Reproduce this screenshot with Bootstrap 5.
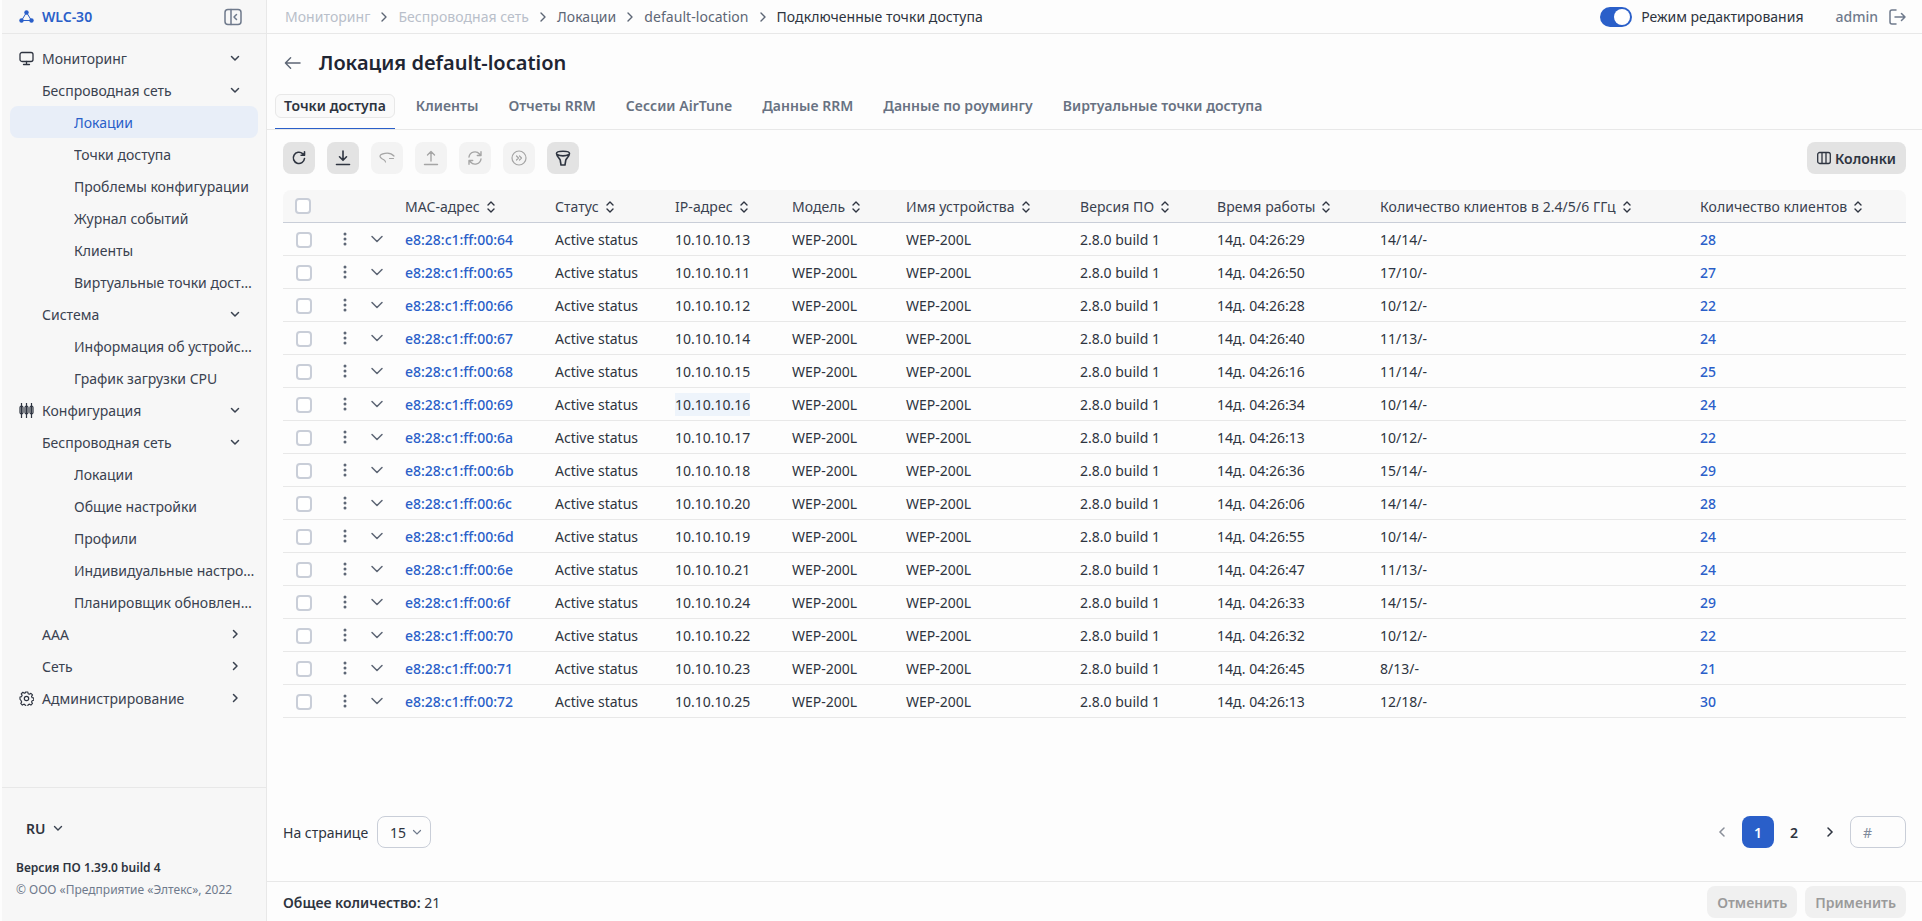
<!DOCTYPE html>
<html lang="ru">
<head>
  <meta charset="UTF-8" />
  <meta name="viewport" content="width=device-width, initial-scale=1.0"/>
  <title>WLC-30</title>
  <link href="https://cdn.jsdelivr.net/npm/bootstrap@5.3.3/dist/css/bootstrap.min.css" rel="stylesheet"/>
  <style>
    html, body { height: 100%; }
    body { background: #fdfdfd; font-family: "Noto Sans", sans-serif; font-size: 14px; color: #2e3440; overflow: hidden; }
    svg { display: block; flex: none; }
    .app-shell { height: 921px; }
    .main-col { min-width: 0; }

    /* sidebar */
    .side-panel { width: 265px; flex: none; margin-left: 2px; background: #f7f7f7; border-right: 1px solid #e8e8e8; }
    .side-head { height: 34px; padding: 0 24px 0 17px; border-bottom: 1px solid #e8e8e8; color: #2a5fc9; font-weight: 600; }
    .side-menu { padding-top: 8px; }
    .side-item { height: 32px; color: #3a4250; white-space: nowrap; padding-right: 25px; }
    .side-l1 { padding-left: 17px; }
    .side-l2 { padding-left: 40px; }
    .side-l3 { padding-left: 64px; padding-right: 3px; margin: 0 8px; border-radius: 8px; }
    .side-l3 span { overflow: hidden; text-overflow: ellipsis; }
    .side-l3.is-active { background: #e8eef8; color: #2a5fc9; }
    .side-ico { width: 15px; margin-right: 8px; }
    .side-foot { border-top: 1px solid #e8e8e8; height: 134px; padding: 28px 14px 0; }
    .lang-pick { padding-left: 10px; font-weight: 600; height: 24px; }
    .ver-line { font-size: 12px; font-weight: 600; margin-top: 19px; }
    .copy-line { font-size: 12px; color: #6f7a8c; margin-top: 4px; }

    /* top bar */
    .top-bar { height: 34px; border-bottom: 1px solid #e8e8e8; padding: 0 16px 0 18px; flex: none; }
    .crumb-list { letter-spacing: .05px; }
    .crumb-muted { color: #b9bfca; }
    .crumb-mid { color: #5d6675; }
    .crumb-sep { margin: 0 9px; }
    .mode-switch { width: 32px; height: 20px; border-radius: 10px; background: #2a5fc9; position: relative; }
    .mode-switch::after { content: ""; position: absolute; right: 2px; top: 2px; width: 16px; height: 16px; background: #fff; border-radius: 50%; }
    .mode-label { margin-left: 9px; }
    .user-name { color: #6f7a8c; font-weight: 500; margin-left: 32px; }
    .user-out { margin-left: 10px; }

    /* title and tabs */
    .page-title { height: 58px; padding-left: 17px; flex: none; }
    .page-title h1 { font-size: 20px; font-weight: 600; margin: 0 0 0 18px; color: #1f2533; }
    .tab-row { height: 38px; border-bottom: 1px solid #e8e8e8; padding: 2px 0 0 8px; flex: none; }
    .tab-link { padding: 0 8px; height: 24px; line-height: 22px; margin-right: 12px; color: #687282; font-weight: 600; letter-spacing: .03px; white-space: nowrap; border: 1px solid transparent; border-radius: 6px; }
    .tab-first { position: relative; color: #2e3440; background: #fafafa; border-color: #e8e8e8; }
    .tab-first::after { content: ""; position: absolute; left: -1px; right: -1px; bottom: -12px; height: 1px; background: #2a5fc9; }

    /* tools */
    .tool-row { padding: 12px 16px 0; height: 60px; flex: none; }
    .tool-group { gap: 12px; }
    .tool-btn { width: 32px; height: 32px; border-radius: 8px; background: #e3e3e3; color: #2e3440; }
    .tool-btn.is-off { background: #f3f3f3; color: #a5a5a5; }
    .cols-btn { height: 32px; padding: 0 10px; border-radius: 8px; background: #e3e3e3; font-weight: 600; color: #2e3440; }

    /* table */
    .grid-wrap { padding: 0 16px; }
    .ap-table { width: 1623px; table-layout: fixed; border-collapse: separate; border-spacing: 0; margin: 0; }
    .ap-table th, .ap-table td { padding: 0; white-space: nowrap; vertical-align: middle; background: transparent; }
    .ap-table th { height: 33px; background: #f7f7f7; font-weight: 400; color: #3a4250; letter-spacing: .06px; border-bottom: 1px solid #c9ced8; }
    .ap-table th:first-child { border-top-left-radius: 8px; }
    .ap-table th:last-child { border-top-right-radius: 8px; }
    .ap-table td { height: 33px; border-bottom: 1px solid #e8e8e8; color: #2e3440; }
    .ap-table a { color: #2a5fc9; font-weight: 500; text-decoration: none; }
    .sort-ico { display: inline-block; vertical-align: -2px; margin-left: 6px; }
    .tick-box { width: 16px; height: 16px; border: 2px solid #c9ced8; border-radius: 4px; background: #fff; margin-left: 12px; }
    td .tick-box { margin: 2px 0 0 13px; }
    .row-dots { margin-left: 20px; }
    .row-chev { margin-left: 4px; }
    .ip-mark { background: #eef4fb; padding: 2px 0; }

    /* bottom */
    .pager-row { padding: 0 16px; height: 98px; flex: none; }
    .page-pick { height: 32px; width: 54px; margin-left: 9px; border: 1px solid #c9ced8; border-radius: 8px; padding: 0 8px 0 12px; }
    .page-num { width: 32px; height: 32px; border-radius: 8px; font-weight: 600; color: #2e3440; }
    .page-num.is-on { background: #2a5fc9; color: #fff; }
    .page-jump { width: 56px; height: 32px; border: 1px solid #c9ced8; border-radius: 8px; padding-left: 12px; color: #7f8a9c; }
    .foot-bar { height: 40px; border-top: 1px solid #e8e8e8; padding: 4px 16px 0; flex: none; }
    .foot-total { padding-top: 6px; }
    .foot-btn { height: 32px; padding: 0 10px; border-radius: 8px; background: #f0f0f0; color: #9a9a9a; font-weight: 600; }
  </style>
</head>
<body>

<div class="app-shell d-flex">
  <!-- Sidebar -->
  <aside class="side-panel d-flex flex-column">
    <div class="side-head d-flex align-items-center justify-content-between">
      <div class="d-flex align-items-center gap-2">
        <svg width="15" height="15" viewBox="0 0 15 15" fill="#2a5fc9"><circle cx="7.5" cy="3.5" r="2.2"/><circle cx="2.5" cy="11.5" r="2.2"/><circle cx="12.5" cy="11.5" r="2.2"/><path d="M7.5 3.5 2.5 11.5h10z" fill="none" stroke="#2a5fc9"/></svg>
        <span>WLC-30</span>
      </div>
      <svg width="18" height="18" viewBox="0 0 18 18" fill="none" stroke="#6f7a8c" stroke-width="1.5"><rect x="1" y="1.5" width="16" height="15" rx="3"/><path d="M7 1.5v15M12.5 6.5 10 9l2.5 2.5" stroke-linecap="round" stroke-linejoin="round"/></svg>
    </div>
    <nav class="side-menu flex-grow-1" id="sideMenu"></nav>
    <div class="side-foot">
      <div class="lang-pick d-flex align-items-center gap-2">RU
        <svg width="10" height="10" viewBox="0 0 10 10" fill="none" stroke="#3a4250" stroke-width="1.4"><path d="M1.5 3.5 5 7l3.5-3.5" stroke-linecap="round"/></svg>
      </div>
      <div class="ver-line">Версия ПО 1.39.0 build 4</div>
      <div class="copy-line">© ООО «Предприятие «Элтекс», 2022</div>
    </div>
  </aside>

  <!-- Main -->
  <main class="main-col flex-grow-1 d-flex flex-column">
    <div class="top-bar d-flex align-items-center justify-content-between">
      <div class="crumb-list d-flex align-items-center" id="crumbs"></div>
      <div class="d-flex align-items-center">
        <span class="mode-switch"></span>
        <span class="mode-label">Режим редактирования</span>
        <span class="user-name">admin</span>
        <svg class="user-out" width="18" height="18" viewBox="0 0 18 18" fill="none" stroke="#6f7a8c" stroke-width="1.5" stroke-linecap="round" stroke-linejoin="round"><path d="M8 2H4a2 2 0 0 0-2 2v10a2 2 0 0 0 2 2h4M7 9h10M13.5 5.5 17 9l-3.5 3.5"/></svg>
      </div>
    </div>

    <div class="page-title d-flex align-items-center">
      <svg width="17" height="14" viewBox="0 0 18 14" fill="none" stroke="#5d6675" stroke-width="1.5" stroke-linecap="round" stroke-linejoin="round"><path d="M17 7H1.5M7 1.5 1.5 7 7 12.5"/></svg>
      <h1>Локация default-location</h1>
    </div>

    <div class="tab-row d-flex align-items-start">
      <span class="tab-link tab-first">Точки доступа</span>
      <span class="tab-link">Клиенты</span>
      <span class="tab-link">Отчеты RRM</span>
      <span class="tab-link">Сессии AirTune</span>
      <span class="tab-link">Данные RRM</span>
      <span class="tab-link">Данные по роумингу</span>
      <span class="tab-link">Виртуальные точки доступа</span>
    </div>

    <div class="tool-row d-flex justify-content-between">
      <div class="d-flex tool-group">
        <span class="tool-btn d-flex align-items-center justify-content-center"><svg width="16" height="16" viewBox="0 0 16 16" fill="none" stroke="currentColor" stroke-width="1.6" stroke-linecap="round" stroke-linejoin="round"><path d="M13.5 8.5A5.6 5.6 0 1 1 11.6 3.6L13.5 5.2M13.5 1.8v3.4h-3.4"/></svg></span>
        <span class="tool-btn d-flex align-items-center justify-content-center"><svg width="16" height="16" viewBox="0 0 16 16" fill="none" stroke="currentColor" stroke-width="1.6" stroke-linecap="round" stroke-linejoin="round"><path d="M8 1v9M4.5 6.8 8 10.3l3.5-3.5M1.5 14.5h13"/></svg></span>
        <span class="tool-btn is-off d-flex align-items-center justify-content-center"><svg width="16" height="16" viewBox="0 0 16 16" fill="none" stroke="currentColor" stroke-width="1.2" stroke-linecap="round" stroke-linejoin="round"><path d="M15 6C13 3.8 9.5 2.7 6 3.3 3 3.8 1 5 1 6.2c0 1.3 2 2.6 3.8 3.6 1 .6 1.5 1 1.7 2.2M10.5 8.5h4"/></svg></span>
        <span class="tool-btn is-off d-flex align-items-center justify-content-center"><svg width="16" height="16" viewBox="0 0 16 16" fill="none" stroke="currentColor" stroke-width="1.4" stroke-linecap="round" stroke-linejoin="round"><path d="M8 11V1.5M4.5 5 8 1.5 11.5 5M1.5 14.5h13"/></svg></span>
        <span class="tool-btn is-off d-flex align-items-center justify-content-center"><svg width="16" height="16" viewBox="0 0 16 16" fill="none" stroke="currentColor" stroke-width="1.4" stroke-linecap="round" stroke-linejoin="round"><path d="M2 7a6 6 0 0 1 10.5-3L14 5.5M14 1.8v3.7h-3.7M14 9a6 6 0 0 1-10.5 3L2 10.5M2 14.2v-3.7h3.7"/></svg></span>
        <span class="tool-btn is-off d-flex align-items-center justify-content-center"><svg width="16" height="16" viewBox="0 0 16 16" fill="none" stroke="currentColor" stroke-width="1.2" stroke-linecap="round" stroke-linejoin="round"><circle cx="8" cy="8" r="7"/><path d="M5.5 6 7.5 8l-2 2M8.5 6l2 2-2 2"/></svg></span>
        <span class="tool-btn d-flex align-items-center justify-content-center"><svg width="16" height="16" viewBox="0 0 16 16" fill="none" stroke="currentColor" stroke-width="1.6" stroke-linecap="round" stroke-linejoin="round"><path d="M1.5 3.5c0-3 13-3 13 0 0 2.5-3.2 5-3.7 6.5L10 15H6l-.8-5C4.7 8.5 1.5 6 1.5 3.5zM2.5 4.8c2.5 1.4 8.5 1.4 11 0"/></svg></span>
      </div>
      <span class="cols-btn d-flex align-items-center gap-1">
        <svg width="14" height="14" viewBox="0 0 14 14" fill="none" stroke="#2e3440" stroke-width="1.3"><rect x=".7" y="1.5" width="12.6" height="11" rx="2"/><path d="M5 1.5v11M9 1.5v11"/></svg>
        Колонки
      </span>
    </div>

    <div class="grid-wrap flex-grow-1">
      <table class="table ap-table">
        <colgroup>
          <col style="width:40px"><col style="width:43px"><col style="width:39px"><col style="width:150px"><col style="width:120px"><col style="width:117px"><col style="width:114px"><col style="width:174px"><col style="width:137px"><col style="width:163px"><col style="width:320px"><col>
        </colgroup>
        <thead id="gridHead"></thead>
        <tbody id="gridBody"></tbody>
      </table>
    </div>

    <div class="pager-row d-flex align-items-center justify-content-between">
      <div class="d-flex align-items-center">
        <span>На странице</span>
        <span class="page-pick d-flex align-items-center justify-content-between">15
          <svg width="10" height="10" viewBox="0 0 10 10" fill="none" stroke="#6f7a8c" stroke-width="1.2"><path d="M1.5 3.5 5 7l3.5-3.5" stroke-linecap="round"/></svg>
        </span>
      </div>
      <div class="d-flex align-items-center gap-1">
        <span class="page-num d-flex align-items-center justify-content-center"><svg width="10" height="12" viewBox="0 0 10 12" fill="none" stroke="#8a8f99" stroke-width="1.5" stroke-linecap="round"><path d="M7 2 3 6l4 4"/></svg></span>
        <span class="page-num is-on d-flex align-items-center justify-content-center">1</span>
        <span class="page-num d-flex align-items-center justify-content-center">2</span>
        <span class="page-num d-flex align-items-center justify-content-center"><svg width="10" height="12" viewBox="0 0 10 12" fill="none" stroke="#2e3440" stroke-width="1.5" stroke-linecap="round"><path d="M3 2l4 4-4 4"/></svg></span>
        <span class="page-jump d-flex align-items-center">#</span>
      </div>
    </div>

    <div class="foot-bar d-flex justify-content-between">
      <div class="foot-total"><span class="fw-semibold">Общее количество:</span> 21</div>
      <div class="d-flex gap-2">
        <span class="foot-btn d-flex align-items-center">Отменить</span>
        <span class="foot-btn d-flex align-items-center">Применить</span>
      </div>
    </div>
  </main>
</div>

<script>
  const crumbSep = '<svg class="crumb-sep" width="10" height="12" viewBox="0 0 10 12" fill="none" stroke="#5d6675" stroke-width="1.4" stroke-linecap="round" stroke-linejoin="round"><path d="M3 2l4 4-4 4"/></svg>';
  document.getElementById('crumbs').innerHTML = [
    ['Мониторинг', 'crumb-muted'], ['Беспроводная сеть', 'crumb-muted'], ['Локации', 'crumb-mid'],
    ['default-location', 'crumb-mid'], ['Подключенные точки доступа', '']
  ].map(([text, cls]) => `<span class="${cls}">${text}</span>`).join(crumbSep);

  const chevDown = '<svg width="12" height="12" viewBox="0 0 12 12" fill="none" stroke="#3a4250" stroke-width="1.5" stroke-linecap="round" stroke-linejoin="round"><path d="M2.5 4.5 6 8l3.5-3.5"/></svg>';
  const chevRight = '<svg width="12" height="12" viewBox="0 0 12 12" fill="none" stroke="#3a4250" stroke-width="1.5" stroke-linecap="round" stroke-linejoin="round"><path d="M4.5 2.5 8 6 4.5 9.5"/></svg>';
  const icoMonitor = '<svg class="side-ico" width="15" height="15" viewBox="0 0 15 15" fill="none" stroke="#2e3440" stroke-width="1.3" stroke-linecap="round"><rect x="1" y="1.5" width="13" height="9" rx="2"/><path d="M7.5 10.5V13M4.5 13.5h6"/></svg>';
  const icoSliders = '<svg class="side-ico" width="15" height="15" viewBox="0 0 15 15" fill="none" stroke="#2e3440" stroke-width="1.2"><path d="M2.5 0v15M7.5 0v15M12.5 0v15"/><rect x="1" y="3" width="3" height="8" rx="1.5"/><rect x="6" y="3" width="3" height="8" rx="1.5"/><rect x="11" y="3" width="3" height="8" rx="1.5"/></svg>';
  const icoGear = '<svg class="side-ico" width="15" height="15" viewBox="0 0 15 15" fill="none" stroke="#2e3440" stroke-width="1.2" stroke-linejoin="round"><circle cx="7.5" cy="7.5" r="2.2"/><path d="M6.3 1h2.4l.4 1.8 1.3.6 1.6-1 1.7 1.7-1 1.6.6 1.3 1.7.4v2.4l-1.7.4-.6 1.3 1 1.6-1.7 1.7-1.6-1-1.3.6-.4 1.7H6.3l-.4-1.7-1.3-.6-1.6 1-1.7-1.7 1-1.6-.6-1.3L.5 8.7V6.3l1.7-.4.6-1.3-1-1.6 1.7-1.7 1.6 1 1.3-.6z" transform="translate(.5 0) scale(.95)"/></svg>';

  const menu = [
    [1, 'Мониторинг', 'd', icoMonitor],
    [2, 'Беспроводная сеть', 'd'],
    [3, 'Локации', '', '', true],
    [3, 'Точки доступа'],
    [3, 'Проблемы конфигурации'],
    [3, 'Журнал событий'],
    [3, 'Клиенты'],
    [3, 'Виртуальные точки доступа'],
    [2, 'Система', 'd'],
    [3, 'Информация об устройстве'],
    [3, 'График загрузки CPU'],
    [1, 'Конфигурация', 'd', icoSliders],
    [2, 'Беспроводная сеть', 'd'],
    [3, 'Локации'],
    [3, 'Общие настройки'],
    [3, 'Профили'],
    [3, 'Индивидуальные настройки'],
    [3, 'Планировщик обновлений'],
    [2, 'AAA', 'r'],
    [2, 'Сеть', 'r'],
    [1, 'Администрирование', 'r', icoGear]
  ];
  document.getElementById('sideMenu').innerHTML = menu.map(([lvl, text, arrow, ico, active]) => `
    <div class="side-item side-l${lvl} d-flex align-items-center ${active ? 'is-active' : ''}">
      ${ico || ''}<span class="${arrow ? 'flex-grow-1' : ''}">${text}</span>
      ${arrow === 'd' ? chevDown : arrow === 'r' ? chevRight : ''}
    </div>`).join('');

  const sortIco = '<svg class="sort-ico" width="10" height="14" viewBox="0 0 10 14" fill="none" stroke="#2e3440" stroke-width="1.4" stroke-linecap="round" stroke-linejoin="round"><path d="M2 5 5 2l3 3M2 9l3 3 3-3"/></svg>';
  const heads = ['MAC-адрес', 'Статус', 'IP-адрес', 'Модель', 'Имя устройства', 'Версия ПО', 'Время работы', 'Количество клиентов в 2.4/5/6 ГГц', 'Количество клиентов'];
  document.getElementById('gridHead').innerHTML = `<tr><th><div class="tick-box"></div></th><th></th><th></th>` +
    heads.map(h => `<th>${h}${sortIco}</th>`).join('') + '</tr>';

  const rows = [
    ['64','13','04:26:29','14/14/-',28], ['65','11','04:26:50','17/10/-',27], ['66','12','04:26:28','10/12/-',22],
    ['67','14','04:26:40','11/13/-',24], ['68','15','04:26:16','11/14/-',25], ['69','16','04:26:34','10/14/-',24],
    ['6a','17','04:26:13','10/12/-',22], ['6b','18','04:26:36','15/14/-',29], ['6c','20','04:26:06','14/14/-',28],
    ['6d','19','04:26:55','10/14/-',24], ['6e','21','04:26:47','11/13/-',24], ['6f','24','04:26:33','14/15/-',29],
    ['70','22','04:26:32','10/12/-',22], ['71','23','04:26:45','8/13/-',21], ['72','25','04:26:13','12/18/-',30]
  ];
  const dots = '<svg class="row-dots" width="4" height="14" viewBox="0 0 4 14" fill="#5d6675"><circle cx="2" cy="2" r="1.5"/><circle cx="2" cy="7" r="1.5"/><circle cx="2" cy="12" r="1.5"/></svg>';
  const rowChev = '<svg class="row-chev" width="14" height="10" viewBox="0 0 14 10" fill="none" stroke="#5d6675" stroke-width="1.5" stroke-linecap="round" stroke-linejoin="round"><path d="M2 2.5 7 7.5l5-5"/></svg>';
  document.getElementById('gridBody').innerHTML = rows.map(([mac, ip, up, cnt, total]) => `
    <tr>
      <td><div class="tick-box"></div></td>
      <td>${dots}</td>
      <td>${rowChev}</td>
      <td><a href="#">e8:28:c1:ff:00:${mac}</a></td>
      <td>Active status</td>
      <td><span class="${ip === '16' ? 'ip-mark' : ''}">10.10.10.${ip}</span></td>
      <td>WEP-200L</td>
      <td>WEP-200L</td>
      <td>2.8.0 build 1</td>
      <td>14д. ${up}</td>
      <td>${cnt}</td>
      <td><a href="#">${total}</a></td>
    </tr>`).join('');
</script>

<script src="https://cdn.jsdelivr.net/npm/bootstrap@5.3.3/dist/js/bootstrap.bundle.min.js"></script>
</body>
</html>
